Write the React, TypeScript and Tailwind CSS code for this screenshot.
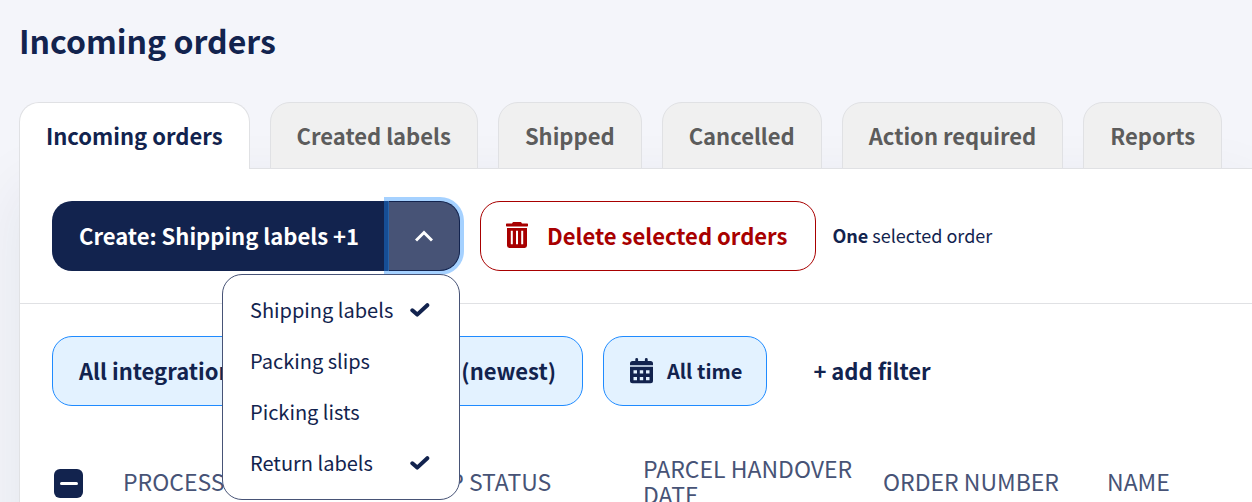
import React from 'react';

const tabs = ['Incoming orders', 'Created labels', 'Shipped', 'Cancelled', 'Action required', 'Reports'];

const options = [
  { name: 'Shipping labels', chosen: true },
  { name: 'Packing slips', chosen: false },
  { name: 'Picking lists', chosen: false },
  { name: 'Return labels', chosen: true },
];

function TrashIcon() {
  return (
    <svg viewBox="0 0 22 26" className="h-[26px] w-[22px]" fill="currentColor" aria-hidden="true">
      <path d="M0.7 1.4H6L6.8 0.3Q7 0 7.4 0H14.6Q15 0 15.2 0.3L16 1.4H21.3Q22 1.4 22 2.1V3.8Q22 4.5 21.3 4.5H0.7Q0 4.5 0 3.8V2.1Q0 1.4 0.7 1.4Z" />
      <path fillRule="evenodd" d="M1 6H21V23.6Q21 26 18.6 26H3.4Q1 26 1 23.6ZM4.8 8.800V22.300H6.800V8.800ZM10 8.800V22.300H12V8.800ZM15.200 8.800V22.300H17.200V8.800Z" />
    </svg>
  );
}

function CalendarIcon() {
  return (
    <svg viewBox="0 0 23 26" className="h-[26px] w-[23px]" fill="currentColor" aria-hidden="true">
      <path d="M2.5 3H5.3V1.300Q5.300 0 6.700 0T8.100 1.300V3H14.900V1.300Q14.900 0 16.300 0T17.700 1.300V3H20.500Q23 3 23 5.500V7.300H0V5.500Q0 3 2.500 3Z" />
      <path fillRule="evenodd" d="M0 8.800H23V22.700Q23 25.200 20.500 25.200H2.500Q0 25.200 0 22.700ZM3.500 12.200V15.500H7V12.200ZM9.800 12.200V15.500H13.200V12.200ZM16 12.200V15.500H19.500V12.200ZM3.500 19V22.300H7V19ZM9.800 19V22.300H13.200V19ZM16 19V22.300H19.500V19Z" />
    </svg>
  );
}

function CheckIcon() {
  return (
    <svg viewBox="0 0 20 16" className="h-4 w-5" fill="none" stroke="currentColor" strokeWidth="4" strokeLinecap="round" strokeLinejoin="round" aria-hidden="true">
      <path d="M2.300 8.300L7.200 12.600L17.300 3.200" />
    </svg>
  );
}

export default function App() {
  return (
    <main className="h-screen overflow-hidden bg-[#f4f5fa] pl-[19px] font-['Noto_Sans_CJK_SC',sans-serif] text-[#12234e]">
      <h1 className="pt-[18px] text-[32px] leading-[44px] font-bold">Incoming orders</h1>
      <section className="pt-10">
        <div role="tablist" className="relative z-10 -mb-px flex gap-5">
          {tabs.map((tab, i) => (
            <button
              key={tab}
              role="tab"
              aria-selected={i === 0}
              className={
                i === 0
                  ? 'h-[67px] shrink-0 rounded-t-[20px] border border-b-0 border-[#e0e1e4] bg-white px-[26px] pb-[3px] text-[22px] leading-8 font-bold whitespace-nowrap'
                  : 'h-[67px] shrink-0 rounded-t-[20px] border border-[#e0e1e4] bg-[#f0f0f0] px-[26px] pb-[2px] text-[22px] leading-8 font-bold whitespace-nowrap text-[#5c5c5c]'
              }
            >
              {tab}
            </button>
          ))}
        </div>
        <div className="h-screen border-t border-l border-[#e0e1e4] bg-white shadow-[0_20px_60px_rgba(18,35,78,0.08)]">
          <div className="flex items-center border-b border-[#e0e1e4] px-8 py-8">
            <div className="relative z-20 flex h-[70px]">
              <button className="rounded-l-[20px] bg-[#12234e] pr-[29px] pb-[2px] pl-[27px] text-[22px] leading-8 font-bold whitespace-nowrap text-white">
                Create: Shipping labels +1
              </button>
              <button
                aria-label="Choose documents"
                aria-expanded="true"
                className="flex w-[72px] items-center justify-center rounded-r-[20px] border border-[#12234e] border-l-[#2664ab] bg-[#475376] text-white shadow-[0_0_0_4px_rgba(31,139,255,0.4)]"
              >
                <svg viewBox="0 0 18 12" className="h-3 w-[18px]" fill="none" stroke="currentColor" strokeWidth="3" aria-hidden="true">
                  <path d="M1 10.500L9 2.500L17 10.500" />
                </svg>
              </button>
              <ul className="absolute top-[73px] right-0 w-[238px] rounded-[20px] border border-[#475376] bg-white pt-[9px] pb-[11px]">
                {options.map((option) => (
                  <li key={option.name}>
                    <button className="flex h-[51px] w-full items-center justify-between pr-[29px] pl-[27px] text-[20px] leading-7 whitespace-nowrap">
                      {option.name}
                      {option.chosen && <CheckIcon />}
                    </button>
                  </li>
                ))}
              </ul>
            </div>
            <button className="ml-5 flex h-[70px] items-center gap-[19px] rounded-[20px] border border-[#a80000] pr-[28px] pb-[2px] pl-[25px] text-[22px] leading-8 font-bold whitespace-nowrap text-[#a80000]">
              <TrashIcon />
              Delete selected orders
            </button>
            <p className="ml-4 pb-[3px] text-[18px] leading-7 whitespace-nowrap">
              <b>One</b> selected order
            </p>
          </div>
          <div className="flex gap-5 px-8 pt-8">
            <button className="h-[70px] w-[240px] rounded-[20px] border border-[#1f8bff] bg-[#e3f2ff] px-[26px] pb-[2px] text-left text-[22px] leading-8 font-bold whitespace-nowrap">
              All integrations
            </button>
            <button className="h-[70px] w-[271px] rounded-[20px] border border-[#1f8bff] bg-[#e3f2ff] px-[26px] pb-[2px] text-right text-[22px] leading-8 font-bold whitespace-nowrap">
              Date (newest)
            </button>
            <button className="flex h-[70px] items-center gap-[14px] rounded-[20px] border border-[#1f8bff] bg-[#e3f2ff] pr-6 pl-[26px] text-[20px] leading-7 font-bold whitespace-nowrap">
              <CalendarIcon />
              All time
            </button>
            <button className="px-[26px] pb-[2px] text-[22px] leading-8 font-bold whitespace-nowrap">+ add filter</button>
          </div>
          <table className="mt-[49px] w-full table-fixed text-left text-[23px] leading-[26px] text-[#475376]">
            <thead>
              <tr>
                <th className="w-[103px] pt-1 pl-[34px]">
                  <span className="relative flex size-[29px]">
                    <input type="checkbox" aria-label="Select all orders" className="size-[29px] appearance-none rounded-md bg-[#12234e]" />
                    <span className="pointer-events-none absolute top-[13px] left-[6px] h-[3px] w-[18px] rounded-full bg-white" />
                  </span>
                </th>
                <th className="w-[260px] font-normal">PROCESSED</th>
                <th className="w-[260px] pl-[29px] font-normal">SHIP STATUS</th>
                <th className="w-[240px] font-normal">PARCEL HANDOVER DATE</th>
                <th className="w-[224px] font-normal">ORDER NUMBER</th>
                <th className="font-normal">NAME</th>
              </tr>
            </thead>
          </table>
        </div>
      </section>
    </main>
  );
}
